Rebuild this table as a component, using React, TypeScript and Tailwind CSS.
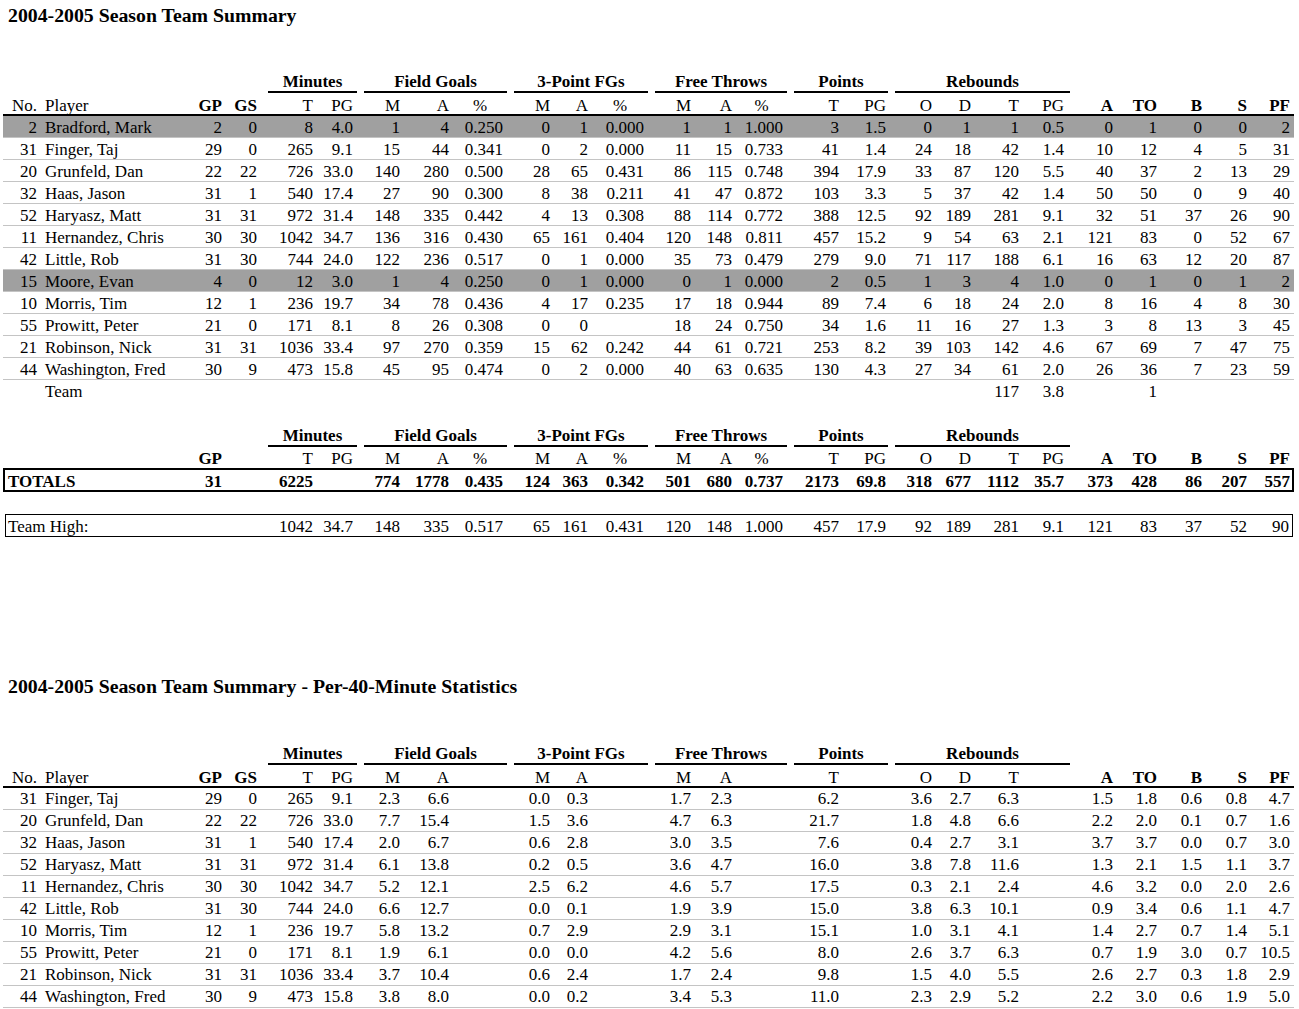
import React from "react";

const COLS =
  "grid-cols-[38px_145px_40px_35px_56px_40px_47px_49px_54px_47px_38px_56px_47px_41px_51px_56px_47px_46px_39px_48px_45px_49px_44px_45px_45px_43px]";
const COLS_HIGH =
  "grid-cols-[36px_145px_40px_35px_56px_40px_47px_49px_54px_47px_38px_56px_47px_41px_51px_56px_47px_46px_39px_48px_45px_49px_44px_45px_45px_42px]";

const BOLD_HEAD = new Set([2, 3, 21, 22, 23, 24, 25]);
const CENTER_HEAD = new Set([8, 11, 14]);

const seasonRows: { d: string; hi?: boolean }[] = [
  { d: "2|Bradford, Mark|2|0|8|4.0|1|4|0.250|0|1|0.000|1|1|1.000|3|1.5|0|1|1|0.5|0|1|0|0|2", hi: true },
  { d: "31|Finger, Taj|29|0|265|9.1|15|44|0.341|0|2|0.000|11|15|0.733|41|1.4|24|18|42|1.4|10|12|4|5|31" },
  { d: "20|Grunfeld, Dan|22|22|726|33.0|140|280|0.500|28|65|0.431|86|115|0.748|394|17.9|33|87|120|5.5|40|37|2|13|29" },
  { d: "32|Haas, Jason|31|1|540|17.4|27|90|0.300|8|38|0.211|41|47|0.872|103|3.3|5|37|42|1.4|50|50|0|9|40" },
  { d: "52|Haryasz, Matt|31|31|972|31.4|148|335|0.442|4|13|0.308|88|114|0.772|388|12.5|92|189|281|9.1|32|51|37|26|90" },
  { d: "11|Hernandez, Chris|30|30|1042|34.7|136|316|0.430|65|161|0.404|120|148|0.811|457|15.2|9|54|63|2.1|121|83|0|52|67" },
  { d: "42|Little, Rob|31|30|744|24.0|122|236|0.517|0|1|0.000|35|73|0.479|279|9.0|71|117|188|6.1|16|63|12|20|87" },
  { d: "15|Moore, Evan|4|0|12|3.0|1|4|0.250|0|1|0.000|0|1|0.000|2|0.5|1|3|4|1.0|0|1|0|1|2", hi: true },
  { d: "10|Morris, Tim|12|1|236|19.7|34|78|0.436|4|17|0.235|17|18|0.944|89|7.4|6|18|24|2.0|8|16|4|8|30" },
  { d: "55|Prowitt, Peter|21|0|171|8.1|8|26|0.308|0|0||18|24|0.750|34|1.6|11|16|27|1.3|3|8|13|3|45" },
  { d: "21|Robinson, Nick|31|31|1036|33.4|97|270|0.359|15|62|0.242|44|61|0.721|253|8.2|39|103|142|4.6|67|69|7|47|75" },
  { d: "44|Washington, Fred|30|9|473|15.8|45|95|0.474|0|2|0.000|40|63|0.635|130|4.3|27|34|61|2.0|26|36|7|23|59" },
];

const teamCells: string[] = Array(26).fill("");
teamCells[1] = "Team";
teamCells[19] = "117";
teamCells[20] = "3.8";
teamCells[22] = "1";
const teamRow = teamCells.join("|");

const per40Rows: string[] = [
  "31|Finger, Taj|29|0|265|9.1|2.3|6.6||0.0|0.3||1.7|2.3||6.2||3.6|2.7|6.3||1.5|1.8|0.6|0.8|4.7",
  "20|Grunfeld, Dan|22|22|726|33.0|7.7|15.4||1.5|3.6||4.7|6.3||21.7||1.8|4.8|6.6||2.2|2.0|0.1|0.7|1.6",
  "32|Haas, Jason|31|1|540|17.4|2.0|6.7||0.6|2.8||3.0|3.5||7.6||0.4|2.7|3.1||3.7|3.7|0.0|0.7|3.0",
  "52|Haryasz, Matt|31|31|972|31.4|6.1|13.8||0.2|0.5||3.6|4.7||16.0||3.8|7.8|11.6||1.3|2.1|1.5|1.1|3.7",
  "11|Hernandez, Chris|30|30|1042|34.7|5.2|12.1||2.5|6.2||4.6|5.7||17.5||0.3|2.1|2.4||4.6|3.2|0.0|2.0|2.6",
  "42|Little, Rob|31|30|744|24.0|6.6|12.7||0.0|0.1||1.9|3.9||15.0||3.8|6.3|10.1||0.9|3.4|0.6|1.1|4.7",
  "10|Morris, Tim|12|1|236|19.7|5.8|13.2||0.7|2.9||2.9|3.1||15.1||1.0|3.1|4.1||1.4|2.7|0.7|1.4|5.1",
  "55|Prowitt, Peter|21|0|171|8.1|1.9|6.1||0.0|0.0||4.2|5.6||8.0||2.6|3.7|6.3||0.7|1.9|3.0|0.7|10.5",
  "21|Robinson, Nick|31|31|1036|33.4|3.7|10.4||0.6|2.4||1.7|2.4||9.8||1.5|4.0|5.5||2.6|2.7|0.3|1.8|2.9",
  "44|Washington, Fred|30|9|473|15.8|3.8|8.0||0.0|0.2||3.4|5.3||11.0||2.3|2.9|5.2||2.2|3.0|0.6|1.9|5.0",
];

const headFull = "No.|Player|GP|GS|T|PG|M|A|%|M|A|%|M|A|%|T|PG|O|D|T|PG|A|TO|B|S|PF";
const headTotals = "||GP||T|PG|M|A|%|M|A|%|M|A|%|T|PG|O|D|T|PG|A|TO|B|S|PF";
const headPer40 = "No.|Player|GP|GS|T|PG|M|A||M|A||M|A||T||O|D|T||A|TO|B|S|PF";

const totals = "TOTALS||31||6225||774|1778|0.435|124|363|0.342|501|680|0.737|2173|69.8|318|677|1112|35.7|373|428|86|207|557";
const teamHigh = "Team High:||||1042|34.7|148|335|0.517|65|161|0.431|120|148|1.000|457|17.9|92|189|281|9.1|121|83|37|52|90";

const groups = [
  { label: "Minutes", cls: "col-[5/7] pl-[7px]" },
  { label: "Field Goals", cls: "col-[7/10] pl-[7px]" },
  { label: "3-Point FGs", cls: "col-[10/13] pl-[7px]" },
  { label: "Free Throws", cls: "col-[13/16] pl-[7px]" },
  { label: "Points", cls: "col-[16/18] pl-[7px] pr-[2px]" },
  { label: "Rebounds", cls: "col-[18/22] pl-[5px] -mr-[2px]" },
];

function GroupRow({ gap }: { gap: boolean }) {
  return (
    <div className={`grid ${COLS} ml-[3px] w-[1291px] h-[21px] ${gap ? "mb-[1px]" : ""}`}>
      {groups.map((g) => (
        <div key={g.label} className={`${g.cls} flex items-end`}>
          <div className="w-full border-b-2 border-black pb-[1px] text-center font-bold leading-[16px] whitespace-nowrap">
            {g.label}
          </div>
        </div>
      ))}
    </div>
  );
}

function HeadRow({ spec, line }: { spec: string; line: boolean }) {
  const cells = spec.split("|");
  return (
    <div
      className={`grid ${COLS} ml-[3px] w-[1291px] items-end leading-[16px] ${
        line ? "h-[22px] border-b-2 border-black" : "h-[21px] pb-[1px]"
      }`}
    >
      {cells.map((c, i) => (
        <div
          key={i}
          className={`whitespace-nowrap ${
            i === 1
              ? "pl-[4px] text-left"
              : CENTER_HEAD.has(i)
              ? "text-center"
              : "pr-[4px] text-right"
          } ${BOLD_HEAD.has(i) ? "font-bold" : ""}`}
        >
          {c}
        </div>
      ))}
    </div>
  );
}

function DataRow({
  spec,
  hi,
  border = true,
  low = false,
}: {
  spec: string;
  hi?: boolean;
  border?: boolean;
  low?: boolean;
}) {
  const cells = spec.split("|");
  return (
    <div
      className={`grid ${COLS} ml-[3px] w-[1291px] h-[22px] ${low ? "leading-[23px]" : "leading-[21px]"} ${
        border ? "border-b border-[#c4c4c4]" : ""
      } ${hi ? "bg-[#a0a0a0]" : ""}`}
    >
      {cells.map((c, i) => (
        <div
          key={i}
          className={`whitespace-nowrap ${i === 1 ? "pl-[4px] text-left" : "pr-[4px] text-right"}`}
        >
          {c}
        </div>
      ))}
    </div>
  );
}

function BoxRow({ spec, bold }: { spec: string; bold?: boolean }) {
  const cells = spec.split("|");
  return (
    <div
      className={
        bold
          ? `grid ${COLS} ml-[3px] w-[1291px] h-[24px] items-end pb-[2px] leading-[16px] font-bold shadow-[inset_0_0_0_2px_#000]`
          : `grid ${COLS_HIGH} ml-[5px] w-[1288px] h-[23px] items-end pb-[2px] leading-[16px] shadow-[inset_0_0_0_1px_#000]`
      }
    >
      <div className={`col-[1/3] whitespace-nowrap ${bold ? "pl-[5px]" : "pl-[3px]"}`}>{cells[0]}</div>
      {cells.slice(2).map((c, i) => (
        <div key={i} className="whitespace-nowrap pr-[4px] text-right">
          {c}
        </div>
      ))}
    </div>
  );
}

export default function App() {
  return (
    <div className="w-[1299px] min-h-[1009px] bg-white text-black text-[17px] font-['Liberation_Serif','Times_New_Roman',serif]">
      <h1 className="mt-[4px] ml-[8px] h-[22px] text-[19.8px] leading-[22px] font-bold whitespace-nowrap">
        2004-2005 Season Team Summary
      </h1>

      <section className="mt-[46px]">
        <GroupRow gap />
        <HeadRow spec={headFull} line />
        {seasonRows.map((r, i) => (
          <DataRow key={i} spec={r.d} hi={r.hi} low />
        ))}
        <DataRow spec={teamRow} border={false} low />
      </section>

      <section className="mt-[24px]">
        <GroupRow gap={false} />
        <HeadRow spec={headTotals} line={false} />
        <BoxRow spec={totals} bold />
        <div className="mt-[22px]">
          <BoxRow spec={teamHigh} />
        </div>
      </section>

      <h1 className="mt-[138px] ml-[8px] h-[22px] text-[19.8px] leading-[22px] font-bold whitespace-nowrap">
        2004-2005 Season Team Summary - Per-40-Minute Statistics
      </h1>

      <section className="mt-[47px]">
        <GroupRow gap />
        <HeadRow spec={headPer40} line />
        {per40Rows.map((r, i) => (
          <DataRow key={i} spec={r} />
        ))}
      </section>
    </div>
  );
}
